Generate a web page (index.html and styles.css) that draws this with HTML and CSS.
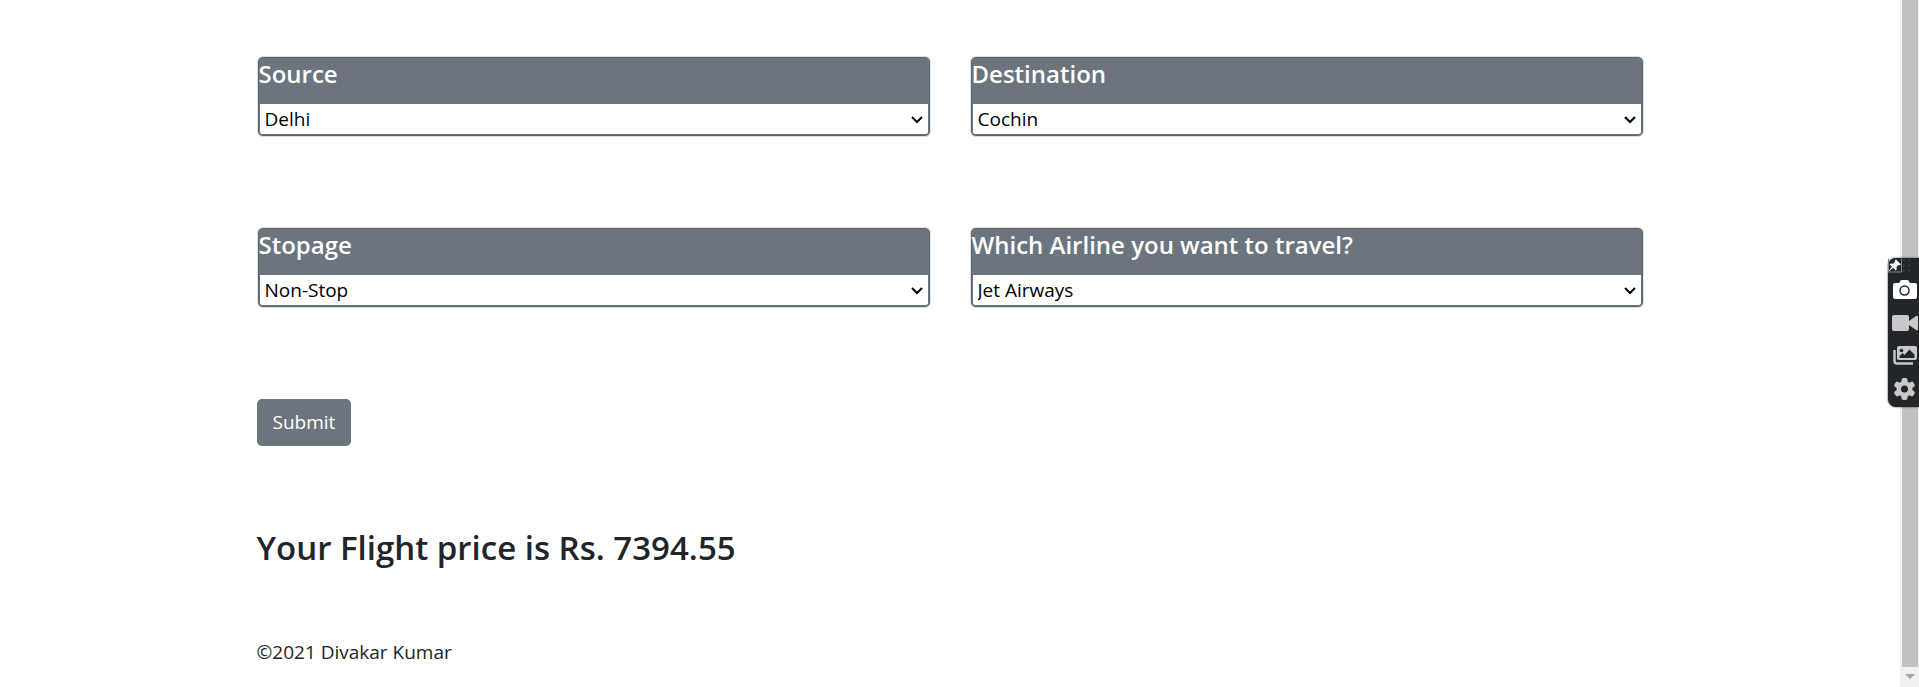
FILE: index.html
```html
<!DOCTYPE html>
<html lang="en">
<head>
<meta charset="utf-8">
<title>Flight Price</title>
<link rel="stylesheet" href="styles.css">
</head>
<body>
<main class="page">
  <form class="form">
    <div class="grid">
      <div class="card">
        <label class="card-title" for="source">Source</label>
        <div class="field">
          <select class="select" id="source"><option>Delhi</option></select>
          <svg class="chevron" viewBox="0 0 12 8"><path d="M1 1l5 5 5-5"/></svg>
        </div>
      </div>
      <div class="card">
        <label class="card-title" for="destination">Destination</label>
        <div class="field">
          <select class="select" id="destination"><option>Cochin</option></select>
          <svg class="chevron" viewBox="0 0 12 8"><path d="M1 1l5 5 5-5"/></svg>
        </div>
      </div>
      <div class="card">
        <label class="card-title" for="stops">Stopage</label>
        <div class="field">
          <select class="select" id="stops"><option>Non-Stop</option></select>
          <svg class="chevron" viewBox="0 0 12 8"><path d="M1 1l5 5 5-5"/></svg>
        </div>
      </div>
      <div class="card">
        <label class="card-title" for="airline">Which Airline you want to travel?</label>
        <div class="field">
          <select class="select" id="airline"><option>Jet Airways</option></select>
          <svg class="chevron" viewBox="0 0 12 8"><path d="M1 1l5 5 5-5"/></svg>
        </div>
      </div>
    </div>
    <button class="submit" type="button">Submit</button>
  </form>
  <h3 class="result">Your Flight price is Rs. 7394.55</h3>
  <footer class="footer">©2021 Divakar Kumar</footer>
</main>
<div class="scrollbar">
  <div class="thumb"></div>
  <svg class="arrow" viewBox="0 0 20 20"><path d="M5 7h10l-5 5z" fill="#a3a3a3"/></svg>
</div>
<aside class="toolbar">
  <svg class="pin" viewBox="0 0 14 14"><path d="M.5 0v13.500h13V0" fill="none" stroke="#85888b"/><path d="M8 1l5 5-1.500.7-1-.2-2 2 .2 2.500-1 1-2.500-2.700L1.500 12.500 1 12l3-3.700L1.500 6l1-1 2.500.2 2-2L6.800 2z" fill="#fff"/></svg>
  <svg class="grip" viewBox="0 0 14 14"><path d="M1 1h2v2H1zM6 1h2v2H6zM1 6h2v2H1zM6 6h2v2H6zM1 11h2v2H1zM6 11h2v2H6z" fill="#3b3f44"/></svg>
  <button class="tool" type="button" aria-label="Screenshot"><svg viewBox="0 0 26 22"><path d="M3 4h4l2-3h7l2 3h5q2 0 2 2v12q0 2-2 2H3q-2 0-2-2V6q0-2 2-2z" fill="#fff"/><circle cx="12.500" cy="11.500" r="4.500" fill="#fff" stroke="#22262b" stroke-width="1.500"/></svg></button>
  <button class="tool" type="button" aria-label="Record video"><svg viewBox="0 0 26 22"><path d="M2 3h13q2 0 2 2v4l7-5q2-1 2 1v12q0 2-2 1l-7-5v4q0 2-2 2H2q-2 0-2-2V5q0-2 2-2z" fill="#c9c9c9"/></svg></button>
  <button class="tool" type="button" aria-label="Gallery"><svg viewBox="0 0 26 22"><path d="M7 1h16q2 0 2 2v10q0 2-2 2H7q-2 0-2-2V3q0-2 2-2z" fill="#c9c9c9"/><circle cx="9.500" cy="5.500" r="1.800" fill="#22262b"/><path d="M7.500 13v-2l3-3 2 2 5-5.500 5 5V13z" fill="#22262b"/><path d="M2.500 5v11q0 2.500 2.500 2.500H21" fill="none" stroke="#c9c9c9" stroke-width="2.400"/></svg></button>
  <button class="tool" type="button" aria-label="Settings"><svg viewBox="0 0 26 22"><g fill="#c9c9c9"><circle cx="12.500" cy="11" r="8"/><rect x="9.500" y="0" width="6" height="22" rx="2"/><rect x="9.500" y="0" width="6" height="22" rx="2" transform="rotate(60 12.500 11)"/><rect x="9.500" y="0" width="6" height="22" rx="2" transform="rotate(120 12.500 11)"/></g><circle cx="12.500" cy="11" r="3.500" fill="#22262b"/></svg></button>
</aside>
</body>
</html>
```
FILE: styles.css
```css
* { box-sizing: border-box; }
body {
  margin: 0;
  min-height: 100vh;
  display: flex;
  background: #fff;
  color: #212529;
  font-family: "Open Sans", "Noto Sans", sans-serif;
  font-size: 19px;
  line-height: 30px;
}
.page {
  flex: 1;
  max-width: 1435px;
  margin: 0 auto;
  padding: 56px 24px 0;
}
.grid {
  display: grid;
  grid-template-columns: 1fr 1fr;
  gap: 90px 39px;
}
.card {
  padding: 1px 1px 2px;
  background: #6c757d;
  border: 1px solid #dee2e6;
  border-radius: 6px;
  box-shadow: inset 0 0 0 1px #5d656c;
}
.card-title {
  display: block;
  height: 46px;
  color: #fff;
  font-size: 24px;
  font-weight: 600;
  line-height: 32px;
}
.field {
  position: relative;
  padding: 0 1px;
}
.select {
  display: block;
  width: 100%;
  height: 30px;
  padding: 0 5px;
  border: 0;
  border-radius: 0 0 2px 2px;
  background: #fff;
  color: #000;
  font: inherit;
  appearance: none;
}
.chevron {
  position: absolute;
  right: 6px;
  top: 12px;
  width: 12px;
  height: 8px;
  fill: none;
  stroke: #000;
  stroke-width: 2;
  pointer-events: none;
}
.submit {
  display: block;
  margin-top: 91px;
  padding: 8px 16px;
  border: 0;
  border-radius: 5px;
  background: #6c757d;
  color: #fff;
  font: inherit;
  line-height: 31px;
}
.result {
  margin: 81px 0 0;
  font-size: 33px;
  font-weight: 600;
  line-height: 42px;
}
.footer { margin-top: 68px; }
.scrollbar {
  width: 19px;
  display: flex;
  flex-direction: column;
  background: #f1f1f1;
}
.thumb {
  flex: 1;
  margin: 0 1px 0 2px;
  background: #c1c1c1;
}
.arrow { height: 20px; width: 20px; }
.toolbar {
  position: fixed;
  right: 0;
  top: 258px;
  width: 31px;
  display: grid;
  grid-template-columns: 14px 1fr;
  padding-bottom: 2px;
  border-radius: 8px 0 0 8px;
  background: #22262b;
  box-shadow: 0 0 2px #22262b;
}
.pin, .grip { width: 14px; height: 15px; }
.tool {
  grid-column: 1 / -1;
  height: 33px;
  padding: 0 0 0 4px;
  border: 0;
  background: none;
  display: flex;
  align-items: center;
}
.tool svg { width: 26px; height: 22px; flex: none; }
```
